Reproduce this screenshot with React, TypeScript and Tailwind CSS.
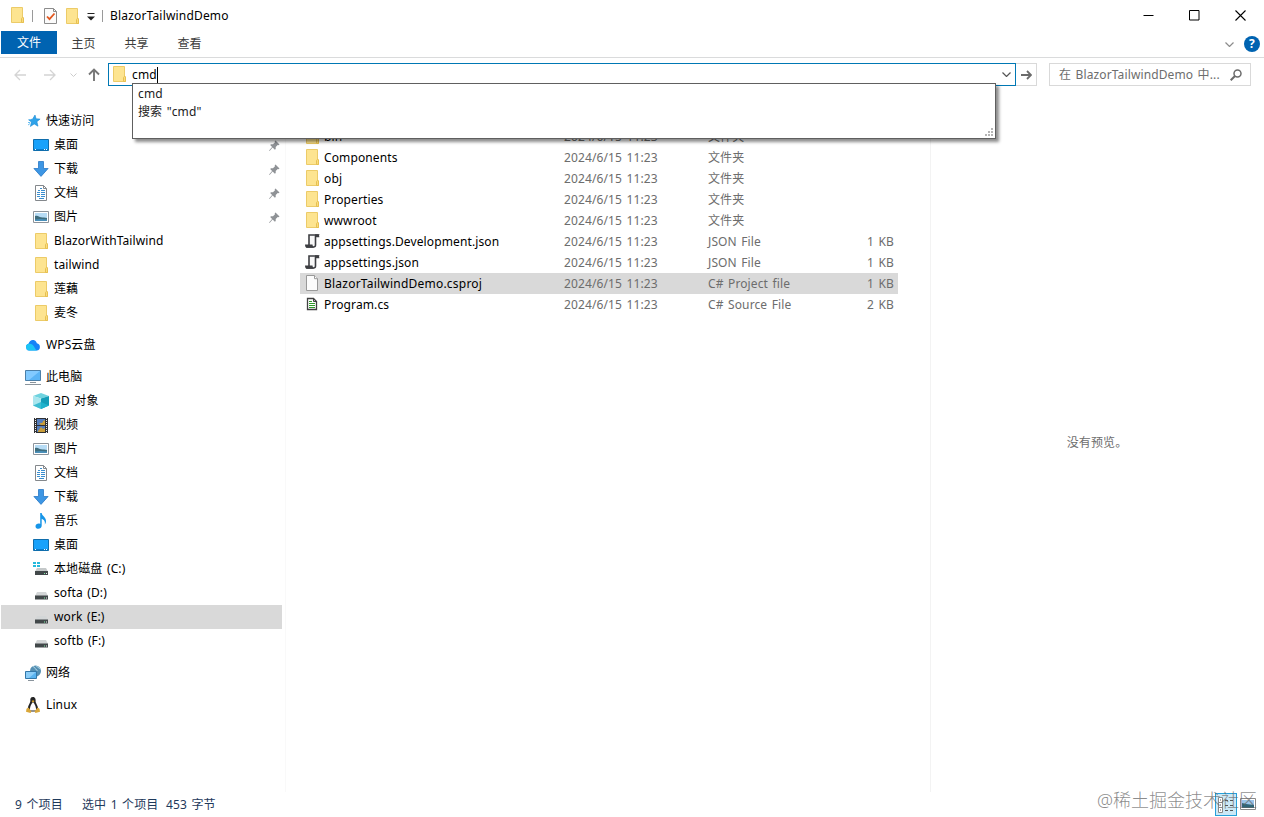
import type { ReactNode } from "react";

type IconName =
  | "star"
  | "desktop"
  | "download"
  | "document"
  | "picture"
  | "folder"
  | "cloud"
  | "computer"
  | "cube"
  | "video"
  | "music"
  | "systemDrive"
  | "drive"
  | "network"
  | "linux"
  | "json"
  | "blank"
  | "source";

interface NavItem {
  label: string;
  icon: IconName;
  pinned?: boolean;
  root?: boolean;
  selected?: boolean;
}

interface FileItem {
  name: string;
  icon: IconName;
  type: string;
  size?: string;
  selected?: boolean;
}

const navGroups: NavItem[][] = [
  [
    { label: "快速访问", icon: "star", root: true },
    { label: "桌面", icon: "desktop", pinned: true },
    { label: "下载", icon: "download", pinned: true },
    { label: "文档", icon: "document", pinned: true },
    { label: "图片", icon: "picture", pinned: true },
    { label: "BlazorWithTailwind", icon: "folder" },
    { label: "tailwind", icon: "folder" },
    { label: "莲藕", icon: "folder" },
    { label: "麦冬", icon: "folder" },
  ],
  [{ label: "WPS云盘", icon: "cloud", root: true }],
  [
    { label: "此电脑", icon: "computer", root: true },
    { label: "3D 对象", icon: "cube" },
    { label: "视频", icon: "video" },
    { label: "图片", icon: "picture" },
    { label: "文档", icon: "document" },
    { label: "下载", icon: "download" },
    { label: "音乐", icon: "music" },
    { label: "桌面", icon: "desktop" },
    { label: "本地磁盘 (C:)", icon: "systemDrive" },
    { label: "softa (D:)", icon: "drive" },
    { label: "work (E:)", icon: "drive", selected: true },
    { label: "softb (F:)", icon: "drive" },
  ],
  [{ label: "网络", icon: "network", root: true }],
  [{ label: "Linux", icon: "linux", root: true }],
];

const files: FileItem[] = [
  { name: "bin", icon: "folder", type: "文件夹" },
  { name: "Components", icon: "folder", type: "文件夹" },
  { name: "obj", icon: "folder", type: "文件夹" },
  { name: "Properties", icon: "folder", type: "文件夹" },
  { name: "wwwroot", icon: "folder", type: "文件夹" },
  { name: "appsettings.Development.json", icon: "json", type: "JSON File", size: "1 KB" },
  { name: "appsettings.json", icon: "json", type: "JSON File", size: "1 KB" },
  { name: "BlazorTailwindDemo.csproj", icon: "blank", type: "C# Project file", size: "1 KB", selected: true },
  { name: "Program.cs", icon: "source", type: "C# Source File", size: "2 KB" },
];

const drawings: Record<IconName, ReactNode> = {
  folder: (
    <>
      <path d="M2.5.5h11v10.2h1v4.8h-12z" fill="#fde490" stroke="#eccb68" />
      <path d="M12.5 15.5v-4l1-1.2 1 .7v4.5z" fill="#fbdc7c" stroke="#e6c052" />
    </>
  ),
  star: (
    <>
      <path
        d="m10 2 1.1 3.8 4 .3-3.2 2.6 1.1 4.5-3.8-2.3-3.8 2.6 1-4.5-2.8-2.2 3.9-.6z"
        fill="#2ea3ea"
        stroke="#1c8ad4"
        strokeWidth=".6"
      />
      <path d="M3 9.5h2M3 12l2-1.4M4 6.5h2" stroke="#6cc0f2" />
    </>
  ),
  desktop: (
    <>
      <path d="M.5 2.5h15v11H.5z" fill="#19a2fb" stroke="#0f6dac" />
      <path d="M1 12.5h14" stroke="#0c7cc9" />
      <path d="M2 12.5h1M11 12.5h1M13 12.5h1" stroke="#fff" />
    </>
  ),
  download: <path d="M5.5.5h5v7h4.6L8 15.4.9 7.5h4.6z" fill="#3d96e4" stroke="#2878c6" strokeWidth=".8" />,
  document: (
    <>
      <path d="M2.5.5h8l3 3v12h-11z" fill="#fff" stroke="#84888c" />
      <path d="M10.5.5v3h3" fill="none" stroke="#84888c" />
      <path d="M7 3.5h2M5 5.5h2M8 5.5h4M4 7.5h3M8 7.5h4M4 9.5h3M8 9.5h4M4 11.5h3M8 11.5h4M6 13.5h5" stroke="#3b8fd0" />
    </>
  ),
  picture: (
    <>
      <path d="M.5 2.5h15v11H.5z" fill="#fff" stroke="#8d949b" />
      <path d="M2 4h12v8H2z" fill="#b7dcf5" />
      <path d="M2 7c3-1 4 1 6 1.2 2 .3 4 0 6 .8v3H2z" fill="#3f6d7d" />
      <path d="M2 10.5c4-.7 8-.7 12 0V12H2z" fill="#4a90ba" />
    </>
  ),
  cloud: (
    <>
      <path d="M4 13.6a3.5 3.5 0 0 1-.5-6.8C4.5 3.5 7 2.3 9.3 3.3c1.5.6 2.2 1.7 2.5 3a3.7 3.7 0 0 1 0 7.3z" fill="#1583f7" />
      <path d="M4 13.6a3.5 3.5 0 0 1-.5-6.8c2.5-.5 4.5.7 5.5 2.7s2.5 3.8 3 4.1z" fill="#1cc5f5" />
    </>
  ),
  computer: (
    <>
      <path d="M.5 1.5h15v10H.5z" fill="#5bb4f5" stroke="#4b7fa8" />
      <path d="M1 2h14L4 11H1z" fill="#82caff" />
      <path d="M5 13.5h6M0 15.5h16" stroke="#8a949c" />
    </>
  ),
  cube: (
    <>
      <path d="M8 0 16 3 8 5.5 0 3z" fill="#6fd3df" />
      <path d="M0 3 8 5.5V16l-8-3.5z" fill="#a9e6ee" />
      <path d="M16 3 8 5.5V16l8-3.5z" fill="#149db8" />
      <path d="m0 12.5 8-3.5v7z" fill="#3dbdd2" />
      <path d="m8 9 8 3.5L8 16z" fill="#1fb2cc" />
    </>
  ),
  video: (
    <>
      <path d="M1 1h14v15H1z" fill="#2f3033" />
      <path d="M4 2h8v6H4z" fill="#547dbd" />
      <path d="M4 9h8v6H4z" fill="#547dbd" />
      <path d="M6 6h3l2-3 1 1v4H8zM5 14l3-4 2 2 2-1v4H5z" fill="#c99d39" />
      <path d="M2.5 1v15M13.5 1v15" stroke="#eee" strokeDasharray="1 1" />
    </>
  ),
  music: (
    <path
      d="M7.2 0h1.5c.2 3 4.5 4 4.3 8.2 0 1.5-.7 2.7-1.3 3.4.8-3-.7-4.9-3-5.8v7c0 3.8-6.2 4-6.2.6 0-2.4 2.7-3.3 4.7-2.5z"
      fill="#1695e8"
    />
  ),
  drive: (
    <>
      <path d="M4 7h9l2 4H2z" fill="#d3d6d7" />
      <path d="M2 10.5h13v4H2z" fill="#42484a" />
      <path d="M11 13h1" stroke="#7ef0a5" />
      <path d="M13 13h1" stroke="#e8eeee" />
    </>
  ),
  systemDrive: (
    <>
      <path d="M0 1h3v2H0zM4 1h3v2H4zM0 4h3v2H0zM4 4h3v2H4z" fill="#25b9dc" />
      <path d="M4 7h9l2 3.5H2z" fill="#c4c8c9" />
      <path d="M2 10h13v4H2z" fill="#42484a" />
      <path d="M11 12.5h1" stroke="#7ef0a5" />
      <path d="M13 12.5h1" stroke="#e8eeee" />
    </>
  ),
  network: (
    <>
      <circle cx="10.5" cy="6" r="5.5" fill="#548fb3" />
      <path d="M8 1.5c3 1 1.5 3 4.5 4M11 .5c2 3 4 2 5 4" stroke="#b9dce8" fill="none" />
      <path d="M.5 6.5h11v7H.5z" fill="#59b3f0" stroke="#3377a8" />
      <path d="M1 7h10l-7 6H1z" fill="#8bcdf8" />
      <path d="M3 15.5h6" stroke="#8a949c" />
    </>
  ),
  linux: (
    <>
      <path
        d="M8 0C5.5 0 5 2 5.4 4 5 6.500 2.500 9 2.800 13c1.500 2 8.500 2 10.400 0 .2-4-2.200-6-2.600-8.500C10.900 2.500 10.400 0 8 0z"
        fill="#242424"
      />
      <path d="M8 5C6.500 6.500 4.500 10 5 13.500h6C11.400 10 9.500 6.500 8 5z" fill="#fff" />
      <path d="m6.500 4 1.500-.7 1.500.7L8 5.600z" fill="#e7ad2a" />
      <path d="m3.500 10.500 3 4-1 1.500-4.500-1.200.5-3zM12.500 10.500l-3 4 1 1.500 4.500-1.200-.5-3z" fill="#d9a739" />
    </>
  ),
  json: (
    <>
      <path d="M5 2h8.5l-2 1.500V12c0 1.500-.8 2-2 2H3.500L5 12z" fill="#f8f8f8" stroke="#3d3e42" strokeWidth="1.600" />
      <path d="M1 11.500h7.500c.1 1.400.7 2.300 1.400 3.300H3c-1.300 0-2-1.300-2-3.300zM11 1.200h3c1 0 1.300 1 1.300 3H11z" fill="#3d3e42" />
    </>
  ),
  blank: (
    <>
      <path d="M2.500.5h8l3 3.200v11.800h-11z" fill="#fcfcfc" stroke="#999" />
      <path d="M10.500.5v3.200h3" fill="#fff" stroke="#999" />
    </>
  ),
  source: (
    <>
      <path d="M3.500 2.500h6l3 3v8h-9z" fill="#fff" stroke="#414141" strokeWidth="1.300" />
      <path d="M9.500 2.500v3h3" fill="none" stroke="#414141" />
      <path d="M5 5.500h3M5 7.500h6M5 9.500h6M5 11.500h6" stroke="#2f9a2a" strokeWidth="1.200" />
    </>
  ),
};

function Icon({ name }: { name: IconName }) {
  return (
    <svg className="h-4 w-4 shrink-0" viewBox="0 0 16 16">
      {drawings[name]}
    </svg>
  );
}

function PinIcon() {
  return (
    <svg className="h-[11px] w-[11px]" viewBox="0 0 11 11">
      <path
        d="m6.500.5 4 4-1 .7-.8-.2L6.700 7v2l-.8.8-2.300-2.300L.6 10.900l-.5-.5 3-3.300L1.200 5l.8-.8h2l2-2-.3-.9z"
        fill="#8f9296"
      />
    </svg>
  );
}

function TitleBar() {
  return (
    <div className="flex h-[31px] items-center pl-[9px]">
      <span className="mb-px flex">
        <Icon name="folder" />
      </span>
      <span className="ml-[7px] h-3 w-px bg-[#9a9a9a]" />
      <svg className="ml-[10px] mt-px h-4 w-4" viewBox="0 0 16 16">
        <path d="M1.500.5h9l3 3v12h-12z" fill="#fbfbfb" stroke="#8c8c8c" />
        <path d="M10.500.5v3h3" fill="none" stroke="#8c8c8c" />
        <path d="m4 8.500 2.500 2.700 5-5.700" fill="none" stroke="#e2571f" strokeWidth="1.800" />
      </svg>
      <span className="mt-px ml-[5px] flex">
        <Icon name="folder" />
      </span>
      <svg className="ml-[7px] mt-[3px] h-2 w-2" viewBox="0 0 8 8">
        <path d="M.5.5h7" stroke="#222" />
        <path d="M0 3.500h8l-4 4z" fill="#222" />
      </svg>
      <span className="ml-[7px] h-3 w-px bg-[#9a9a9a]" />
      <span className="ml-[7px] text-black tracking-[0.18px]">BlazorTailwindDemo</span>
      <div className="ml-auto mr-[18px] flex items-center gap-[35px]">
        <svg className="h-[11px] w-[11px]" viewBox="0 0 11 11">
          <path d="M.5 5.500h10" stroke="#000" />
        </svg>
        <svg className="h-[11px] w-[11px]" viewBox="0 0 11 11">
          <path d="M.5.5h9.500v9.500H.5z" fill="none" stroke="#000" />
        </svg>
        <svg className="h-[11px] w-[11px]" viewBox="0 0 11 11">
          <path d="m.5.5 10 10m0-10-10 10" stroke="#000" strokeWidth="1.100" />
        </svg>
      </div>
    </div>
  );
}

function RibbonTabs() {
  return (
    <div className="flex h-[27px] border-b border-[#dadbdc] pl-px text-[#3c3c3c]">
      <div className="flex h-[23px] w-14 items-center justify-center bg-[#0063b1] text-white">文件</div>
      <div className="flex h-[25px] w-[53px] items-center justify-center">主页</div>
      <div className="flex h-[25px] w-[53px] items-center justify-center">共享</div>
      <div className="flex h-[25px] w-[53px] items-center justify-center">查看</div>
      <svg className="ml-auto mr-[10px] mt-[11px] h-[5px] w-[9px]" viewBox="0 0 9 5">
        <path d="m.5.5 4 4 4-4" fill="none" stroke="#8c8c8c" strokeWidth="1.200" />
      </svg>
      <div className="mr-1 mt-[5px] flex h-4 w-4 items-center justify-center rounded-full bg-[#0063b1] text-xs font-bold text-white">
        ?
      </div>
    </div>
  );
}

function Suggestions() {
  return (
    <div className="absolute left-[23px] top-[19px] z-10 h-[56px] w-[864px] border border-[#5f5f5f] bg-white pl-[5px] pt-px leading-[18px] text-[#222] shadow-[3px_3px_3px_rgba(0,0,0,0.45)]">
      <div>cmd</div>
      <div>搜索 "cmd"</div>
      <svg className="absolute bottom-[2px] right-[2px] h-2 w-2" viewBox="0 0 8 8">
        <path d="M6 0h2v2H6zM3 3h2v2H3zM6 3h2v2H6zM0 6h2v2H0zM3 6h2v2H3zM6 6h2v2H6z" fill="#b5b5b5" />
      </svg>
    </div>
  );
}

function AddressBar() {
  return (
    <div className="flex h-[33px] items-center pl-[14px]">
      <svg className="h-3 w-3" viewBox="0 0 12 12">
        <path d="M12 6H1m5-5L1 6l5 5" fill="none" stroke="#d4d4d4" strokeWidth="1.300" />
      </svg>
      <svg className="ml-[18px] h-3 w-3" viewBox="0 0 12 12">
        <path d="M0 6h11M6 1l5 5-5 5" fill="none" stroke="#d4d4d4" strokeWidth="1.300" />
      </svg>
      <svg className="ml-[14px] h-1 w-[7px]" viewBox="0 0 7 4">
        <path d="m.5.5 3 3 3-3" fill="none" stroke="#ccc" />
      </svg>
      <svg className="ml-[11px] h-[13px] w-3" viewBox="0 0 12 13">
        <path d="M6 13V1.500M1 6.500l5-5 5 5" fill="none" stroke="#777" strokeWidth="1.900" />
      </svg>
      <div className="relative ml-2 flex h-[23px] w-[908px] items-center border border-[#0078b4] pl-[2px]">
        <span className="mb-px flex">
          <Icon name="folder" />
        </span>
        <span className="ml-[5px] text-black">cmd</span>
        <span className="h-4 w-px bg-black" />
        <svg className="ml-auto mr-1 h-[5px] w-[9px]" viewBox="0 0 9 5">
          <path d="m.5.5 4 4 4-4" fill="none" stroke="#555" strokeWidth="1.200" />
        </svg>
        <Suggestions />
      </div>
      <div className="flex h-[23px] w-[21px] items-center justify-center border border-l-0 border-[#d9d9d9]">
        <svg className="h-[10px] w-[11px]" viewBox="0 0 11 10">
          <path d="M0 5h10M6 1l4 4-4 4" fill="none" stroke="#6b6b6b" strokeWidth="1.800" />
        </svg>
      </div>
      <div className="ml-3 flex h-[23px] w-[202px] items-center border border-[#d9d9d9] pl-[9px] text-[#6d6d6d]">
        在 BlazorTailwindDemo 中...
        <svg className="ml-auto mr-[8px] h-3 w-3" viewBox="0 0 12 12">
          <circle cx="7.500" cy="4.500" r="3.500" fill="none" stroke="#6b6b6b" strokeWidth="1.500" />
          <path d="M5 7 .7 11.300" stroke="#6b6b6b" strokeWidth="2" />
        </svg>
      </div>
    </div>
  );
}

function Sidebar() {
  return (
    <nav className="flex w-[286px] shrink-0 flex-col gap-2 border-r border-[#f9f9f9] pt-[18px] text-black">
      {navGroups.map((group, index) => (
        <ul key={index}>
          {group.map((item) => (
            <li
              key={item.label}
              className={`ml-px mr-[3px] flex h-6 items-center ${item.root ? "pl-6" : "pl-8"} ${
                item.selected ? "bg-[#d9d9d9]" : ""
              }`}
            >
              <Icon name={item.icon} />
              <span className="ml-[5px]">{item.label}</span>
              {item.pinned && (
                <span className="ml-auto mr-[2px]">
                  <PinIcon />
                </span>
              )}
            </li>
          ))}
        </ul>
      ))}
    </nav>
  );
}

function FileList() {
  return (
    <main className="w-[645px] shrink-0 border-r border-[#f3f3f3] pl-[14px] pt-[35px]">
      {files.map((file) => (
        <div
          key={file.name}
          className={`flex h-[21px] w-[598px] items-center pl-1 text-[#6d6d6d] ${file.selected ? "bg-[#d9d9d9]" : ""}`}
        >
          <span className="mb-px flex">
            <Icon name={file.icon} />
          </span>
          <span className={`ml-1 w-60 text-black ${file.selected ? "tracking-[0.22px]" : ""}`}>{file.name}</span>
          <span className="w-36">2024/6/15 11:23</span>
          <span className="w-[126px]">{file.type}</span>
          <span className="w-[60px] text-right">{file.size}</span>
        </div>
      ))}
    </main>
  );
}

function StatusBar() {
  return (
    <footer className="relative flex h-[25px] items-center pl-[15px] text-[#1e395b]">
      <span className="w-[67px]">9 个项目</span>
      <span className="w-[84px]">选中 1 个项目</span>
      <span>453 字节</span>
      <div className="ml-auto mr-[27px] flex h-[23px] w-[22px] items-center justify-center border border-[#26a0da] bg-[#cbe8f6]">
        <svg className="h-4 w-4" viewBox="0 0 16 16">
          <path d="M.5.5h4v15h-4zM.5 5.500h4m-4 5h4" fill="#fff" stroke="#888" />
          <path d="M2 3h1M2 8h1M2 13h1" stroke="#555" />
          <path d="M7 3.500h3m2 0h3M7 8.500h3m2 0h3M7 13.500h3m2 0h3" stroke="#555" />
        </svg>
      </div>
      <svg className="absolute right-2 top-[6px] h-3 w-4" viewBox="0 0 16 12">
        <path d="M.5.5h15v11H.5z" fill="#fff" stroke="#888" />
        <path d="M2 2h12v8H2z" fill="#9bc4e8" />
        <path d="m2 5 4 1 8 1v3H2z" fill="#2f6577" />
      </svg>
      <span className="absolute right-[7px] top-[-4px] whitespace-nowrap text-[18px] font-light leading-6 tracking-normal text-[#666]/75">
        @稀土掘金技术社区
      </span>
    </footer>
  );
}

export default function App() {
  return (
    <div className="flex h-[817px] w-[1264px] flex-col overflow-hidden bg-white font-['Noto_Sans','Noto_Sans_CJK_SC',sans-serif] text-xs tracking-[0.12px] [word-spacing:1.2px]">
      <TitleBar />
      <RibbonTabs />
      <AddressBar />
      <div className="flex min-h-0 flex-1">
        <Sidebar />
        <FileList />
        <aside className="flex flex-1 items-center justify-center pr-px pt-[2px] text-[#6d6d6d]">没有预览。</aside>
      </div>
      <StatusBar />
    </div>
  );
}
